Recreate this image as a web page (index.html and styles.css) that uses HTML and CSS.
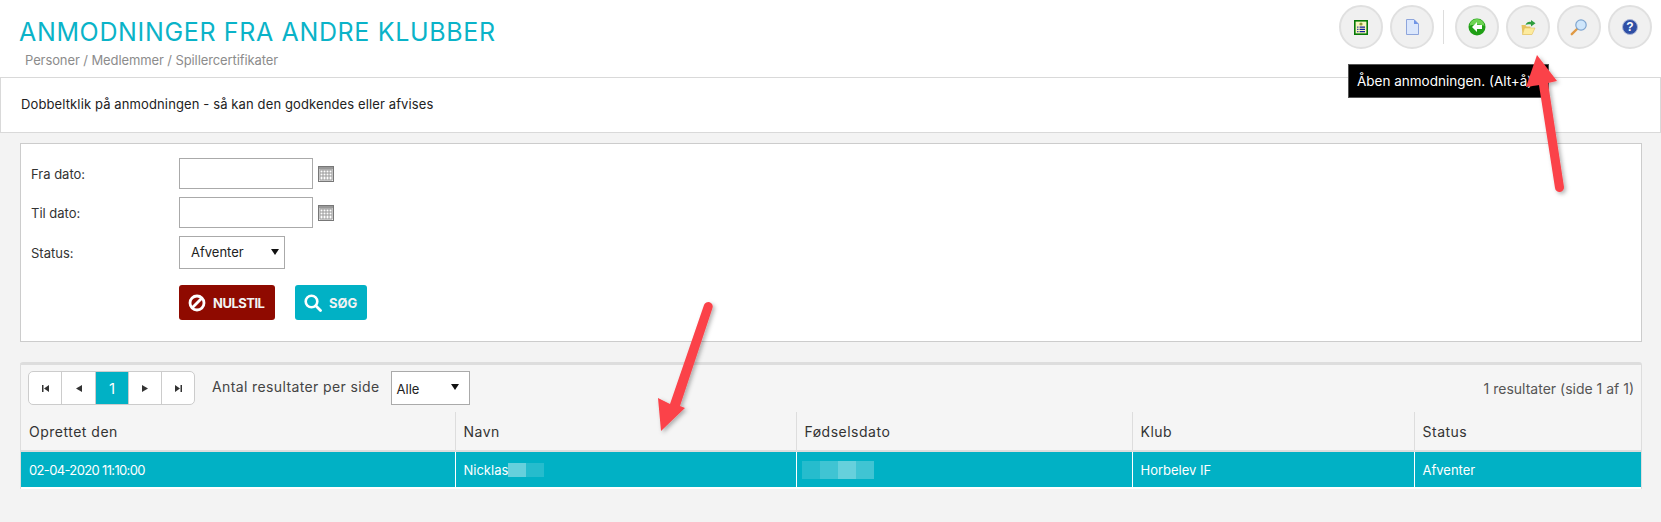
FILE: index.html
```html
<!DOCTYPE html>
<html lang="da">
<head>
  <meta charset="UTF-8">
  <meta name="viewport" content="width=device-width, initial-scale=1.0">
  <title>Anmodninger fra andre klubber</title>
  <link rel="stylesheet" href="styles.css">
</head>
<body>

  <header class="page-header">
    <div class="page-header__titles">
      <h1 class="page-header__title">ANMODNINGER FRA ANDRE KLUBBER</h1>
      <div class="page-header__crumbs">Personer / Medlemmer / Spillercertifikater</div>
    </div>
    <div class="toolbar">
      <button class="toolbar__btn" type="button" aria-label="Liste">
        <svg width="14" height="15" viewBox="0 0 14 15">
          <rect x=".8" y=".8" width="12.400" height="13.400" fill="#f8f5c0" stroke="#067a06" stroke-width="1.600"/>
          <circle cx="7" cy="4" r="1.600" fill="#8f9a35"/>
          <path d="M3.200 7.200h1.200M5.600 7.200h5.400M3.200 9.400h1.200M5.600 9.400h5.400M3.200 11.600h1.200M5.600 11.600h5.400" stroke="#101f9c" stroke-width="1.300"/>
        </svg>
      </button>
      <button class="toolbar__btn" type="button" aria-label="Ny">
        <svg width="13" height="16" viewBox="0 0 13 16">
          <path d="M.5.5h7.500l4.500 4.500v10.500h-12z" fill="#dbe7fc" stroke="#8ea5dc"/>
          <path d="M8 .5v4.500h4.500z" fill="#6f94e6"/>
        </svg>
      </button>
      <span class="toolbar__sep"></span>
      <button class="toolbar__btn" type="button" aria-label="Tilbage">
        <svg width="18" height="18" viewBox="0 0 18 18">
          <circle cx="9" cy="9" r="8.500" fill="#1f9f15"/>
          <path d="M1.500 8a7.500 7 0 0 1 15 0c-3-2-12-2-15 0z" fill="#6fd455"/>
          <path d="M9 4 4 9l5 5v-3h5V7H9z" fill="#fff"/>
        </svg>
      </button>
      <button class="toolbar__btn" type="button" aria-label="Åben">
        <svg width="15" height="15" viewBox="0 0 15 15">
          <path d="M.500 5h4l1 1.500h4V14.500H1.500z" fill="#e6c25f"/>
          <path d="M1.500 14.500 3.500 8H14l-3 6.500z" fill="#fdeb9e" stroke="#e3c05c" stroke-width=".6"/>
          <path d="M4.500 5C5.500 2 8 1.500 10 2V0L14.500 3.200 10 6.500V4.500C8 4 6 4 4.500 5z" fill="#2f9e3e"/>
        </svg>
      </button>
      <button class="toolbar__btn" type="button" aria-label="Søg">
        <svg width="18" height="18" viewBox="0 0 18 18">
          <path d="M7.500 10.500 1.800 16.200" stroke="#e09a45" stroke-width="2.400" stroke-linecap="round"/>
          <circle cx="11" cy="7" r="5.200" fill="#cfe6fb" stroke="#7fa5cf" stroke-width="1.200"/>
        </svg>
      </button>
      <button class="toolbar__btn" type="button" aria-label="Hjælp">
        <svg width="16" height="16" viewBox="0 0 16 16">
          <circle cx="8" cy="8" r="7.500" fill="#2f4fa5" stroke="#aab5d6" stroke-width="1"/>
          <text class="toolbar__help" x="8" y="12.300" text-anchor="middle">?</text>
        </svg>
      </button>
    </div>
  </header>

  <div class="tooltip">Åben anmodningen. (Alt+å)</div>

  <div class="message">Dobbeltklik på anmodningen - så kan den godkendes eller afvises</div>

  <form class="filter">
    <div class="filter__row">
      <label class="filter__label">Fra dato:</label>
      <input class="filter__input" type="text">
      <svg class="filter__cal" width="16" height="16" viewBox="0 0 16 16">
        <rect x=".5" y=".5" width="15" height="15" fill="#eee" stroke="#777"/>
        <rect x="1" y="1" width="14" height="2.500" fill="#999"/>
        <path d="M2 4v10h12V4zM5 4v10M8 4v10M11 4v10M2 7h12M2 10h12" fill="#fff" stroke="#999"/>
      </svg>
    </div>
    <div class="filter__row">
      <label class="filter__label">Til dato:</label>
      <input class="filter__input" type="text">
      <svg class="filter__cal" width="16" height="16" viewBox="0 0 16 16">
        <rect x=".5" y=".5" width="15" height="15" fill="#eee" stroke="#777"/>
        <rect x="1" y="1" width="14" height="2.500" fill="#999"/>
        <path d="M2 4v10h12V4zM5 4v10M8 4v10M11 4v10M2 7h12M2 10h12" fill="#fff" stroke="#999"/>
      </svg>
    </div>
    <div class="filter__row">
      <label class="filter__label">Status:</label>
      <div class="select select--status">
        Afventer
        <span class="select__arrow"></span>
      </div>
    </div>
    <div class="filter__actions">
      <button class="btn btn--reset" type="button">
        <svg width="18" height="18" viewBox="0 0 18 18">
          <circle cx="9" cy="9" r="7" fill="none" stroke="#fff" stroke-width="2.800"/>
          <path d="M4.500 13.500 13.500 4.500" stroke="#fff" stroke-width="2.800"/>
        </svg>
        NULSTIL
      </button>
      <button class="btn btn--search" type="button">
        <svg width="18" height="18" viewBox="0 0 18 18">
          <circle cx="7.500" cy="7.500" r="5.800" fill="none" stroke="#fff" stroke-width="2.600"/>
          <path d="M11.800 11.800 16.500 16.500" stroke="#fff" stroke-width="2.800" stroke-linecap="round"/>
        </svg>
        SØG
      </button>
    </div>
  </form>

  <section class="results">
    <div class="results__bar">
      <div class="pager">
        <span class="pager__btn">
          <svg width="9" height="9" viewBox="0 0 9 9"><path d="M1 1v7h1.500V1zM8 1v7L3 4.500z" fill="#333"/></svg>
        </span>
        <span class="pager__btn">
          <svg width="9" height="9" viewBox="0 0 9 9"><path d="M8 1v7L2 4.500z" fill="#333"/></svg>
        </span>
        <span class="pager__btn pager__btn--current">1</span>
        <span class="pager__btn">
          <svg width="9" height="9" viewBox="0 0 9 9"><path d="M1 1v7l6-3.500z" fill="#333"/></svg>
        </span>
        <span class="pager__btn">
          <svg width="9" height="9" viewBox="0 0 9 9"><path d="M1 1v7l5-3.500zM6.500 1v7H8V1z" fill="#333"/></svg>
        </span>
      </div>
      <span class="results__per-page">Antal resultater per side</span>
      <div class="select select--size">
        Alle
        <span class="select__arrow"></span>
      </div>
      <span class="results__count">1 resultater (side 1 af 1)</span>
    </div>

    <table class="grid">
      <colgroup>
        <col class="grid__col-created">
        <col class="grid__col-name">
        <col class="grid__col-birth">
        <col class="grid__col-club">
        <col>
      </colgroup>
      <thead>
        <tr>
          <th>Oprettet den</th>
          <th>Navn</th>
          <th>Fødselsdato</th>
          <th>Klub</th>
          <th>Status</th>
        </tr>
      </thead>
      <tbody>
        <tr>
          <td class="grid__date">02-04-2020 11:10:00</td>
          <td>
            <span class="censor-wrap">Nicklas<span class="censor censor--name"><i class="px px--40"></i><i class="px px--15"></i></span></span>
          </td>
          <td>
            <span class="censor censor--birth"><i class="px px--15"></i><i class="px px--25"></i><i class="px px--40"></i><i class="px px--25"></i></span>
          </td>
          <td>Horbelev IF</td>
          <td>Afventer</td>
        </tr>
      </tbody>
    </table>
  </section>

  <!-- red arrows drawn on top of the screenshot -->
  <svg class="arrows" width="1661" height="522" viewBox="0 0 1661 522">
    <defs>
      <filter id="arrow-shadow" x="-30%" y="-30%" width="160%" height="160%">
        <feDropShadow dx="2" dy="2" stdDeviation="2" flood-color="#000" flood-opacity="0.3"/>
      </filter>
    </defs>
    <g fill="#fb4249" filter="url(#arrow-shadow)">
      <path d="M1537 55 1557 81 1548 83 1564 187a4.500 4.500 0 0 1-9 1L1539 85 1526 87z"/>
      <path d="M661 431 658 398 670 404 704 305a4.500 4.500 0 0 1 8.500 3L680 406 685 408z"/>
    </g>
  </svg>

</body>
</html>
```

FILE: styles.css
```css
:root {
  --clr-teal: #01b1c5;
  --clr-line: #d9d9d9;
  --clr-text: #333;

  font-size: 13px;
  font-family: Inter, "Open Sans", sans-serif;
}

* {
  box-sizing: border-box;
}

html {
  height: 100%;
}

body {
  position: relative;
  min-height: 100%;
  margin: 0;
  padding-bottom: 34px;
  background: #f3f3f3;
  color: var(--clr-text);
  overflow: hidden;
}

.page-header {
  height: 77px;
  display: flex;
  justify-content: space-between;
  background: #fff;
  padding: 5px 9px 0 20px;
}

.page-header__title {
  margin: 12px 0 0 -1px;
  font-size: 25px;
  font-weight: 400;
  line-height: 30px;
  letter-spacing: 0.65px;
  color: #0ab3c8;
}

.page-header__crumbs {
  margin: 5px 0 0 5px;
  font-size: 13px;
  line-height: 16px;
  letter-spacing: -0.1px;
  color: #8c8c8c;
}

.toolbar {
  display: flex;
  align-items: flex-start;
  gap: 7px;
}

.toolbar__btn {
  width: 44px;
  height: 44px;
  display: flex;
  align-items: center;
  justify-content: center;
  padding: 0;
  background: #f0f0f0;
  border: 2px solid #e0e0e0;
  border-radius: 50%;
}

.toolbar__help {
  font-size: 12px;
  font-weight: 700;
  fill: #fff;
}

.toolbar__sep {
  width: 1px;
  height: 34px;
  margin: 5px 4px 0 2px;
  background: #ddd;
}

.tooltip {
  position: absolute;
  top: 64px;
  left: 1348px;
  width: 201px;
  height: 34px;
  padding: 0 8px;
  line-height: 32px;
  font-size: 13.5px;
  white-space: nowrap;
  overflow: hidden;
  color: #fff;
  background: #000;
  border: 1px solid #555;
}

.message {
  height: 56px;
  padding: 0 20px;
  line-height: 53px;
  font-size: 13px;
  letter-spacing: 0.12px;
  color: #222;
  background: #fff;
  border: 1px solid var(--clr-line);
}

.filter {
  height: 199px;
  margin: 10px 19px 0 20px;
  padding: 14px 10px 0;
  background: #fff;
  border: 1px solid #ccc;
}

.filter__row {
  display: flex;
  align-items: center;
  gap: 5px;
  margin-bottom: 8px;
}

.filter__label {
  width: 143px;
}

.filter__input {
  width: 134px;
  height: 31px;
  padding: 0 6px;
  background: #fff;
  border: 1px solid #aaa;
}

.filter__cal {
  flex: none;
}

.select {
  position: relative;
  height: 33px;
  padding-left: 11px;
  line-height: 31px;
  color: #222;
  background: #fff;
  border: 1px solid #aaa;
}

.select--status {
  width: 106px;
}

.select--status .select__arrow {
  right: 5px;
}

.select--size {
  width: 79px;
  height: 34px;
  margin-left: 11px;
  padding-left: 5px;
  line-height: 34px;
  font-size: 13px;
}

.select__arrow {
  position: absolute;
  top: 12px;
  right: 10px;
  border-style: solid;
  border-width: 6px 4px 0;
  border-color: #111 transparent transparent;
}

.filter__actions {
  display: flex;
  gap: 20px;
  margin: 16px 0 0 148px;
}

.btn {
  height: 35px;
  display: flex;
  align-items: center;
  gap: 7px;
  padding: 0 0 0 9px;
  font-family: inherit;
  font-size: 13px;
  font-weight: 700;
  color: #f2f2f2;
  border: 0;
  border-radius: 3px;
}

.btn svg {
  flex: none;
}

.btn--reset {
  width: 96px;
  letter-spacing: -0.5px;
  background: #8f0a00;
}

.btn--search {
  width: 72px;
  background: var(--clr-teal);
}

.results {
  margin: 20px 19px 0 20px;
  background: #f5f5f5;
  border-top: 3px solid #ddd;
  border-left: 1px solid #ddd;
  border-right: 1px solid #ddd;
  border-radius: 3px 3px 0 0;
}

.results__bar {
  height: 47px;
  display: flex;
  align-items: flex-start;
  padding: 6px 7px 0 7px;
}

.pager {
  display: flex;
  height: 34px;
  background: #fff;
  border: 1px solid #ccc;
  border-radius: 5px;
  overflow: hidden;
}

.pager__btn {
  width: 33px;
  display: flex;
  align-items: center;
  justify-content: center;
  border-right: 1px solid #ccc;
  font-size: 15px;
}

.pager__btn:nth-child(2) {
  width: 34px;
}

.pager__btn:last-child {
  width: 32px;
  border-right: 0;
}

.pager__btn--current {
  color: #fff;
  background: var(--clr-teal);
}

.results__per-page {
  margin-left: 17px;
  line-height: 32px;
  font-size: 14px;
  letter-spacing: 0.38px;
  color: #444;
}

.results__count {
  margin-left: auto;
  line-height: 36px;
  font-size: 14px;
  color: #555;
}

.grid {
  width: 100%;
  table-layout: fixed;
  border-collapse: collapse;
}

.grid__col-created {
  width: 434px;
}

.grid__col-name {
  width: 341px;
}

.grid__col-birth {
  width: 336px;
}

.grid__col-club {
  width: 282px;
}

.grid th {
  height: 39px;
  padding: 0 8px;
  text-align: left;
  font-size: 14px;
  font-weight: 400;
  letter-spacing: 0.5px;
  color: #333;
  border-left: 1px solid #ddd;
  border-bottom: 2px solid #ddd;
}

.grid th:first-child,
.grid td:first-child {
  border-left: 0;
}

.grid td {
  height: 37px;
  padding: 0 8px;
  font-size: 13px;
  color: #fff;
  background: var(--clr-teal);
  border-left: 1px solid #fff;
  border-bottom: 2px solid #fff;
}

.grid td.grid__date {
  letter-spacing: -0.65px;
}

.censor-wrap {
  display: inline-flex;
  align-items: center;
}

.censor {
  display: inline-flex;
  vertical-align: middle;
}

.censor--birth {
  margin-left: -3px;
}

.px {
  display: block;
  width: 18px;
}

.censor--name .px {
  height: 14px;
}

.censor--birth .px {
  height: 18px;
}

.px--15 {
  background: rgba(255, 255, 255, 0.15);
}

.px--25 {
  background: rgba(255, 255, 255, 0.25);
}

.px--40 {
  background: rgba(255, 255, 255, 0.4);
}

.arrows {
  position: absolute;
  top: 0;
  left: 0;
  pointer-events: none;
}
```
